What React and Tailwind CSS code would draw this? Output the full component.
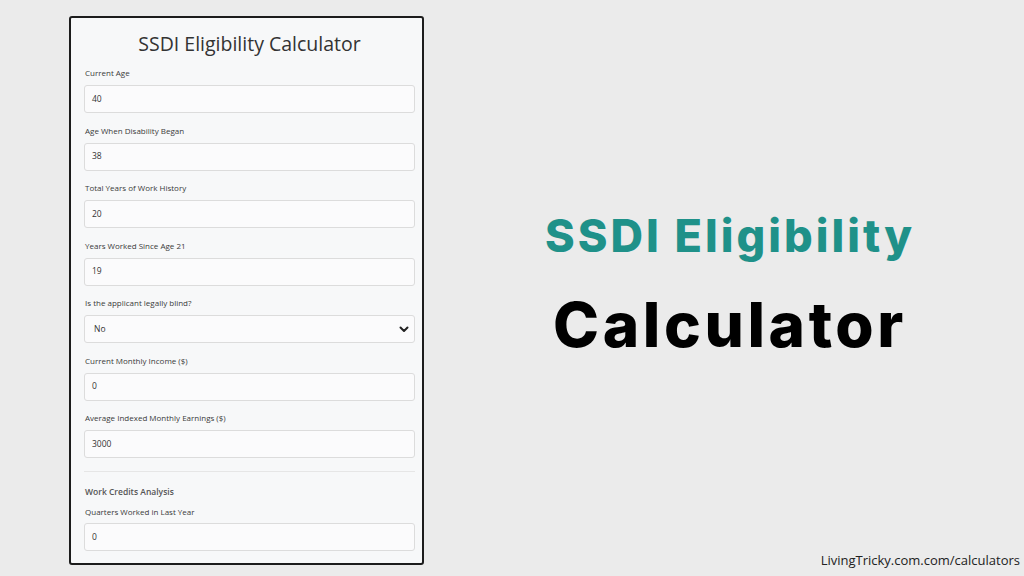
import React from "react";

const uiFont = { fontFamily: '"Open Sans", "Noto Sans", sans-serif' };

function Field({ label, value, select, last }) {
  return (
    <div className={last ? "" : "mb-[11.5px]"}>
      <div className="h-[12px] leading-[12px] text-[8px] text-[#3a3a3a] mb-[6px] pl-[1px]">{label}</div>
      {select ? (
        <div className="h-[28px] border border-[#dcdcdc] rounded-[3px] bg-[#fbfbfc] flex items-center justify-between pl-[9px] pr-[4px]">
          <span className="text-[8.5px] text-[#333]">{value}</span>
          <svg width="12" height="12" viewBox="0 0 24 24" fill="none" stroke="#222" strokeWidth="4" strokeLinecap="round" strokeLinejoin="round">
            <path d="M5 9l7 7 7-7" />
          </svg>
        </div>
      ) : (
        <div className="h-[28px] border border-[#dcdcdc] rounded-[3px] bg-[#fbfbfc] flex items-center pl-[7px]">
          <span className="text-[8.5px] text-[#333]">{value}</span>
        </div>
      )}
    </div>
  );
}

export default function App() {
  return (
    <div className="w-[1024px] h-[576px] bg-[#ebebeb] flex overflow-hidden">
      <div className="ml-[69px] mt-[16px] w-[355px] h-[549px] border-2 border-[#1c1c1c] rounded-[3px] bg-[#f7f8f9] pl-[13px] pr-[7px] pt-[12px] box-border" style={uiFont}>
        <div className="h-[28px] leading-[28px] text-center text-[19.5px] font-medium text-[#333] mb-[9px]">SSDI Eligibility Calculator</div>
        <Field label="Current Age" value="40" />
        <Field label="Age When Disability Began" value="38" />
        <Field label="Total Years of Work History" value="20" />
        <Field label="Years Worked Since Age 21" value="19" />
        <Field label="Is the applicant legally blind?" value="No" select />
        <Field label="Current Monthly Income ($)" value="0" />
        <Field label="Average Indexed Monthly Earnings ($)" value="3000" last />
        <div className="mt-[13px] h-px bg-[#e6e6e6]" />
        <div className="mt-[14px] h-[12px] leading-[12px] text-[8.5px] font-semibold text-[#555] pl-[1px]">Work Credits Analysis</div>
        <div className="mt-[8px] h-[12px] leading-[12px] text-[8px] text-[#3a3a3a] mb-[5px] pl-[1px]">Quarters Worked in Last Year</div>
        <div className="h-[28px] border border-[#dcdcdc] rounded-[3px] bg-[#fbfbfc] flex items-center pl-[7px]">
          <span className="text-[8.5px] text-[#333]">0</span>
        </div>
      </div>
      <div className="flex-1 flex flex-col">
        <div className="flex-1 flex flex-col items-center pt-[211px] pl-[12px]" style={{ fontFamily: 'Inter, "Noto Sans", sans-serif' }}>
          <div className="text-[45px] leading-[50px] font-extrabold text-[#1f9189] tracking-[3px]">SSDI Eligibility</div>
          <div className="mt-[29px] text-[62px] leading-[70px] font-extrabold text-black tracking-[3.6px]">Calculator</div>
        </div>
        <div className="text-right pr-[4px] pb-[6px] text-[13px] text-[#222]" style={uiFont}>LivingTricky.com.com/calculators</div>
      </div>
    </div>
  );
}
